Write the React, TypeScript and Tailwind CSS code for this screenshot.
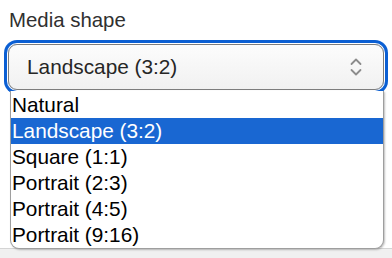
const options = [
  'Natural',
  'Landscape (3:2)',
  'Square (1:1)',
  'Portrait (2:3)',
  'Portrait (4:5)',
  'Portrait (9:16)',
]

export default function App() {
  const selected = 'Landscape (3:2)'

  return (
    <div className="relative flex h-[258px] w-[392px] flex-col bg-white font-['Liberation_Sans',Arial,sans-serif]">
      {/* label */}
      <div className="pl-[9px] pt-2 text-[20.4px] leading-6 text-[#303030]">Media shape</div>

      {/* select box */}
      <div className="ml-2 mt-3 flex h-[46px] w-[376px] items-center justify-between rounded-[9px] border border-[#7d7d7d] bg-gradient-to-b from-[#fcfcfc] to-[#f1f1f1] pl-[18px] pr-[21px] shadow-[0_0_0_1px_#ffffff,0_0_0_4px_#0b5fd3]">
        <span className="text-[20.8px] leading-6 text-[#262626]">{selected}</span>
        <svg width="12" height="18" viewBox="0 0 12 18" fill="none" stroke="#8c8c8c" strokeWidth="1.8" strokeLinecap="round" strokeLinejoin="round">
          <path d="M1.5 6 L6 1.5 L10.5 6" />
          <path d="M1.5 12 L6 16.5 L10.5 12" />
        </svg>
      </div>

      {/* open list */}
      <div className="absolute left-[10px] top-[91px] z-10 flex w-[374px] flex-col overflow-hidden rounded-b-[9px] border border-t-0 border-[#9e9e9e] bg-white pt-[1px] shadow-[1px_1px_2px_rgba(0,0,0,0.25)]">
        {options.map((o) => (
          <div
            key={o}
            className={`flex h-[26px] items-center pl-[1px] text-[20.8px] leading-6 ${
              o === selected ? 'bg-[#1967d2] text-white' : 'text-black'
            }`}
          >
            {o}
          </div>
        ))}
      </div>

      {/* page below */}
      <div className="mt-auto h-[10px] border-t border-[#d4d4d4] bg-[#f0f0f0]" />
    </div>
  )
}
